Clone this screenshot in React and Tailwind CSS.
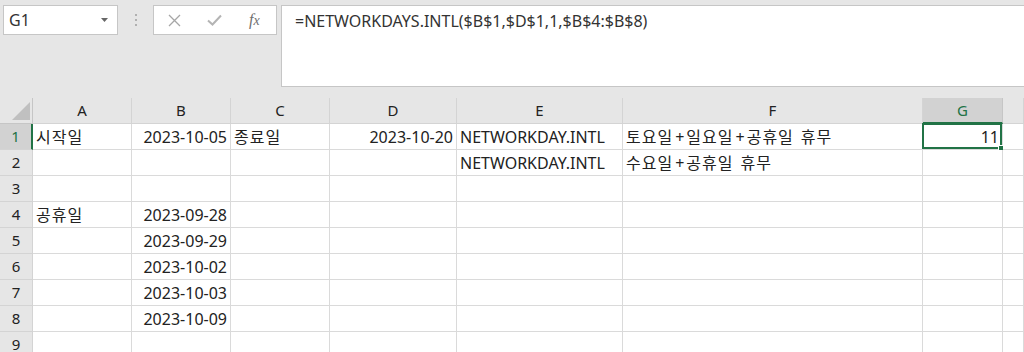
import React from "react";

const cols = ["A", "B", "C", "D", "E", "F", "G", ""];
const font = { fontFamily: '"Noto Sans", "Noto Sans CJK KR", sans-serif' };

function Ko({ text }) {
  const parts = text.split(/(\+| )/);
  return (
    <span className="inline-flex items-center">
      {parts.map((p, i) =>
        p === "+" ? (
          <span key={i} className="px-[2px]">+</span>
        ) : p === " " ? (
          <span key={i} className="inline-block w-[7px]" />
        ) : (
          <span key={i} className="tracking-[1px]">{p}</span>
        )
      )}
    </span>
  );
}

const rows = [
  ["시작일", "2023-10-05", "종료일", "2023-10-20", "NETWORKDAY.INTL", "토요일+일요일+공휴일 휴무", "11", ""],
  ["", "", "", "", "NETWORKDAY.INTL", "수요일+공휴일 휴무", "", ""],
  ["", "", "", "", "", "", "", ""],
  ["공휴일", "2023-09-28", "", "", "", "", "", ""],
  ["", "2023-09-29", "", "", "", "", "", ""],
  ["", "2023-10-02", "", "", "", "", "", ""],
  ["", "2023-10-03", "", "", "", "", "", ""],
  ["", "2023-10-09", "", "", "", "", "", ""],
  ["", "", "", "", "", "", "", ""],
];

const rightCols = new Set([1, 3, 6]);
const hasKo = (s) => /[\uac00-\ud7a3]/.test(s);

export default function App() {
  return (
    <div className="w-[1024px] h-[352px] overflow-hidden bg-[#e6e6e6] text-[#222]" style={font}>
      {/* Top formula bar area */}
      <div className="h-[98px] flex items-start pt-[5px] pl-[3px]">
        <div className="w-[115px] h-[30px] bg-white border border-[#c6c6c6] flex items-center justify-between pl-[5px] pr-[9px]">
          <span className="text-[16px] text-[#333]">G1</span>
          <svg width="7" height="4" viewBox="0 0 7 4"><path d="M0 0h7L3.5 4z" fill="#666" /></svg>
        </div>
        <div className="w-[35px] h-[30px] flex flex-col items-center justify-center gap-[3px]">
          <div className="w-[2px] h-[2px] bg-[#b0b0b0]" />
          <div className="w-[2px] h-[2px] bg-[#b0b0b0]" />
          <div className="w-[2px] h-[2px] bg-[#b0b0b0]" />
        </div>
        <div className="w-[124px] h-[30px] bg-white border border-[#c6c6c6] flex items-center pl-[14px] gap-[26px]">
          <svg width="13" height="13" viewBox="0 0 13 13">
            <path d="M1 1L12 12M12 1L1 12" stroke="#a6a6a6" strokeWidth="1.3" fill="none" />
          </svg>
          <svg width="15" height="12" viewBox="0 0 15 12">
            <path d="M1 6.5L5.5 10.5L14 1.5" stroke="#b4b4b4" strokeWidth="2" fill="none" />
          </svg>
          <span className="text-[16px] text-[#707070] italic leading-none ml-[1px]" style={{ fontFamily: '"Liberation Serif", serif' }}>
            f<span className="text-[14px]">x</span>
          </span>
        </div>
        <div className="ml-[4px] flex-1 h-[82px] bg-white border border-r-0 border-[#c6c6c6] pl-[13px] pt-[3px]">
          <span className="text-[16px] text-[#333]">=NETWORKDAYS.INTL($B$1,$D$1,1,$B$4:$B$8)</span>
        </div>
      </div>

      {/* Grid */}
      <div className="grid grid-cols-[33px_99px_99px_99px_127px_166px_300px_80px_1fr]">
        <div className="h-[26px] bg-[#e6e6e6] border-r border-b border-[#c6c6c6] relative overflow-hidden">
          <svg className="absolute right-[2px] bottom-[3px]" width="18" height="18" viewBox="0 0 18 18">
            <path d="M18 0V18H0z" fill="#c0c0c0" />
          </svg>
        </div>
        {cols.map((c, i) =>
          c === "G" ? (
            <div key={i} className="h-[26px] bg-[#d2d2d2] border-r border-[#c6c6c6] border-b-2 border-b-[#217346] flex items-center justify-center text-[15px] text-[#217346]">
              {c}
            </div>
          ) : (
            <div key={i} className="h-[26px] bg-[#e6e6e6] border-r border-b border-[#d4d4d4] flex items-center justify-center text-[15px] text-[#222]">
              {c}
            </div>
          )
        )}
        {rows.map((r, ri) => (
          <React.Fragment key={ri}>
            {ri === 0 ? (
              <div className="h-[26px] bg-[#d2d2d2] border-r-2 border-r-[#217346] border-b border-b-[#d4d4d4] flex items-center justify-center text-[15px] text-[#217346]">
                1
              </div>
            ) : (
              <div className="h-[26px] bg-[#e6e6e6] border-r border-b border-[#d4d4d4] flex items-center justify-center text-[15px] text-[#222]">
                {ri + 1}
              </div>
            )}
            {r.map((v, ci) => (
              <div
                key={ci}
                className={
                  "h-[26px] bg-white border-r border-b border-[#dadada] flex items-center px-[3px] text-[16px] whitespace-nowrap relative " +
                  (rightCols.has(ci) ? "justify-end" : "justify-start")
                }
              >
                {hasKo(v) ? <Ko text={v} /> : v}
                {ri === 0 && ci === 6 && (
                  <div className="absolute -left-[1px] -top-[1px] right-0 bottom-0 border-2 border-[#217346] pointer-events-none">
                    <div className="absolute -right-[4px] -bottom-[4px] w-[6px] h-[6px] bg-[#217346] border border-white" />
                  </div>
                )}
              </div>
            ))}
          </React.Fragment>
        ))}
      </div>
    </div>
  );
}
